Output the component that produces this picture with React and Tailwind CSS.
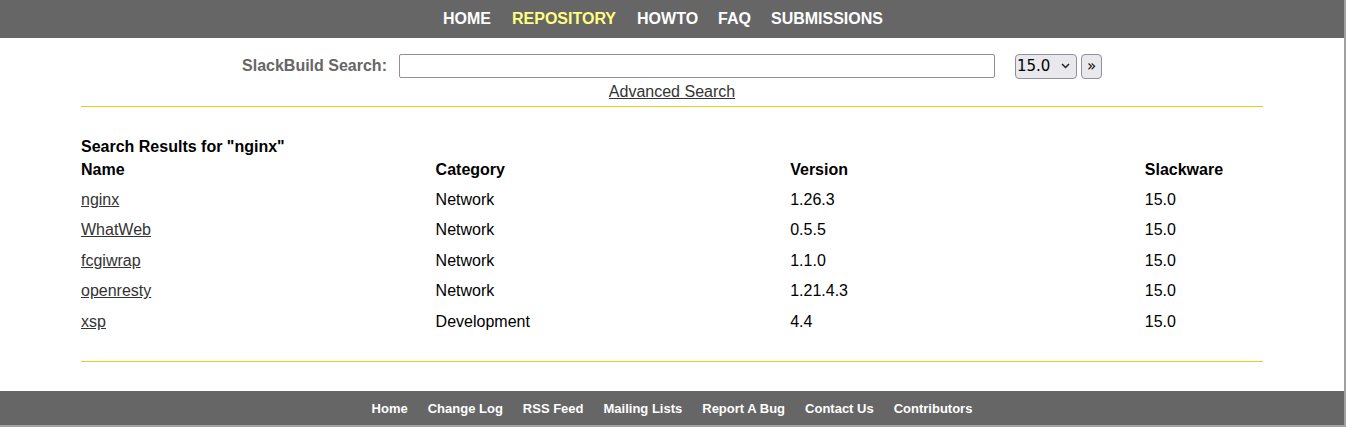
import React from "react";

const rows = [
  ["nginx", "Network", "1.26.3", "15.0"],
  ["WhatWeb", "Network", "0.5.5", "15.0"],
  ["fcgiwrap", "Network", "1.1.0", "15.0"],
  ["openresty", "Network", "1.21.4.3", "15.0"],
  ["xsp", "Development", "4.4", "15.0"],
];

export default function App() {
  const font = { fontFamily: '"Liberation Sans", Arial, sans-serif' };
  return (
    <div className="h-[427px] w-[1346px] bg-[#a0a0a0]" style={font}>
      <div className="w-[1344px] h-[425px] bg-white flex flex-col">
        <div className="h-[38px] bg-[#666666] flex items-center justify-center text-[16px] font-bold text-white pl-[2px]">
          <span className="mr-[21px]">HOME</span>
          <span className="mr-[21px] text-[#ffff80]">REPOSITORY</span>
          <span className="mr-[20px]">HOWTO</span>
          <span className="mr-[20px]">FAQ</span>
          <span className="mr-[20px]">SUBMISSIONS</span>
        </div>

        <div className="mx-[81px] flex flex-col">
          <div className="pt-[16px] flex items-center justify-center">
            <span className="text-[16px] font-bold text-[#666666] mr-[12px]">SlackBuild Search:</span>
            <div className="w-[596px] h-[24px] border border-[#8f8f9d] rounded-[2px] bg-white"></div>
            <div className="ml-[20px] w-[62px] h-[25px] border border-[#8f8f9d] rounded-[4px] bg-[#e9e9ed] flex items-center justify-between pl-[1px] pr-[6px] text-black" style={{ fontFamily: '"DejaVu Sans", sans-serif', fontSize: "15px" }}>
              <span>15.0</span>
              <svg width="9" height="6" viewBox="0 0 9 6"><path d="M1 1l3.5 3.5L8 1" fill="none" stroke="#222" strokeWidth="1.5" /></svg>
            </div>
            <div className="ml-[4px] w-[21px] h-[25px] border border-[#8f8f9d] rounded-[4px] bg-[#e9e9ed] flex items-center justify-center text-[15px] text-black" style={{ fontFamily: '"DejaVu Sans", sans-serif' }}>»</div>
          </div>
          <div className="text-center mt-[3px] h-[19px] leading-[19px] text-[16px]">
            <span className="underline text-[#333333]">Advanced Search</span>
          </div>
          <div className="mt-[5px] h-[1px] bg-[#f2c81e]"></div>

          <div className="mt-[31px] text-[16px] font-bold text-black leading-[18px]">Search Results for "nginx"</div>
          <div className="flex flex-col text-[16px] text-black">
            <div className="flex h-[28px] items-center font-bold">
              <div className="w-[30%]">Name</div>
              <div className="w-[30%]">Category</div>
              <div className="w-[30%]">Version</div>
              <div className="w-[10%]">Slackware</div>
            </div>
            <div className="h-[1px]"></div>
            {rows.map((r) => (
              <div key={r[0]} className="flex h-[30.5px] items-center">
                <div className="w-[30%]"><span className="underline text-[#333333]">{r[0]}</span></div>
                <div className="w-[30%]">{r[1]}</div>
                <div className="w-[30%]">{r[2]}</div>
                <div className="w-[10%]">{r[3]}</div>
              </div>
            ))}
          </div>
          <div className="mt-[24px] h-[1px] bg-[#f2c81e]"></div>
        </div>

        <div className="mt-[29px] h-[34px] pt-[2px] bg-[#666666] flex items-center justify-center gap-[20px] text-[13px] font-bold text-white">
          <span>Home</span>
          <span>Change Log</span>
          <span>RSS Feed</span>
          <span>Mailing Lists</span>
          <span>Report A Bug</span>
          <span>Contact Us</span>
          <span>Contributors</span>
        </div>
      </div>
    </div>
  );
}
